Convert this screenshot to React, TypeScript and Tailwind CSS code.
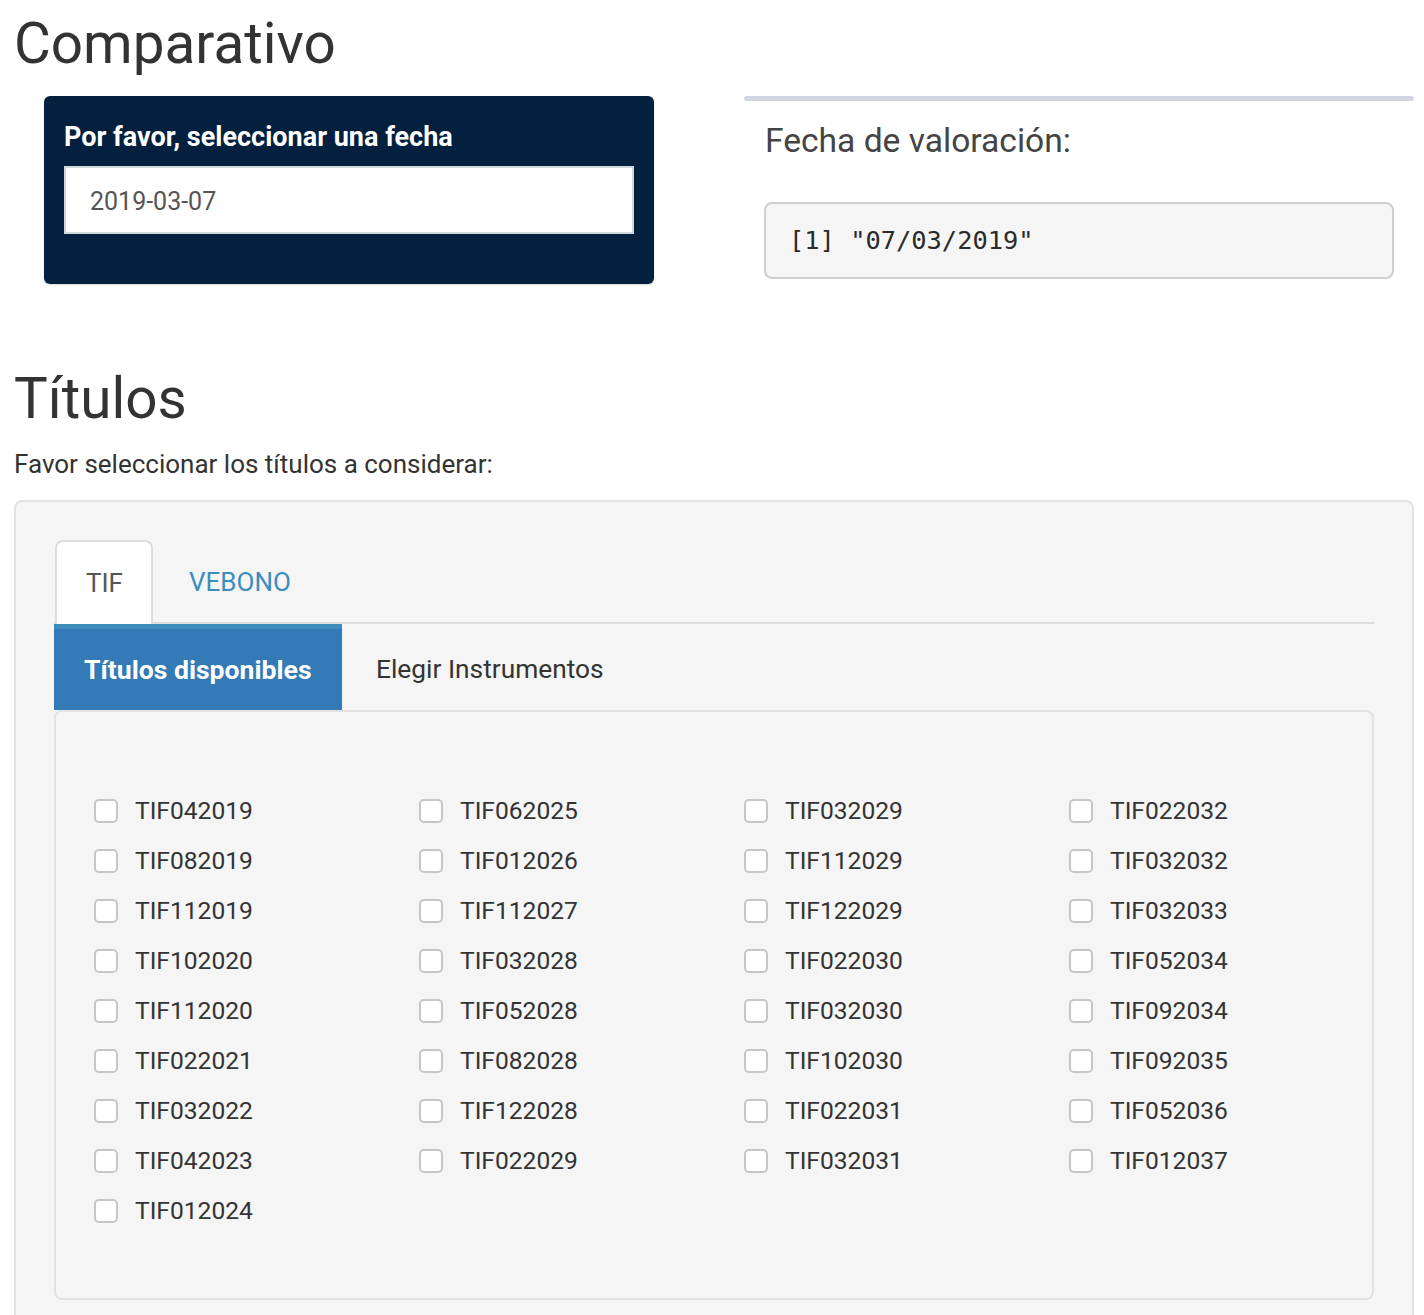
import React from "react";

const cols: string[][] = [
  ["TIF042019", "TIF082019", "TIF112019", "TIF102020", "TIF112020", "TIF022021", "TIF032022", "TIF042023", "TIF012024"],
  ["TIF062025", "TIF012026", "TIF112027", "TIF032028", "TIF052028", "TIF082028", "TIF122028", "TIF022029"],
  ["TIF032029", "TIF112029", "TIF122029", "TIF022030", "TIF032030", "TIF102030", "TIF022031", "TIF032031"],
  ["TIF022032", "TIF032032", "TIF032033", "TIF052034", "TIF092034", "TIF092035", "TIF052036", "TIF012037"],
];

function Check({ label }: { label: string }) {
  return (
    <div className="flex h-[50px] items-center">
      <span className="box-border h-[24px] w-[24px] shrink-0 rounded-[5px] border-2 border-[#c6c6c6] bg-white" />
      <span className="ml-[17px] text-[24.6px] leading-[50px] text-[#333]">{label}</span>
    </div>
  );
}

export default function App() {
  return (
    <div className="min-h-[1315px] w-[1424px] bg-white pl-[14px] pr-[10px] text-[#333]" style={{ fontFamily: "Roboto, 'Liberation Sans', sans-serif" }}>
      <h1 className="pt-[11px] text-[56.6px] font-normal leading-[66px] text-[#333]">Comparativo</h1>

      <div className="mt-[19px] flex">
        <div className="w-[700px]">
          <div className="ml-[30px] box-border h-[188px] w-[610px] rounded-[6px] bg-[#03203f] pl-[20px] pt-[25px] shadow-[0_1px_2px_rgba(0,0,0,0.15)]">
            <div className="text-[27px] font-bold leading-[32px] text-white">Por favor, seleccionar una fecha</div>
            <div className="mt-[13px] box-border flex h-[68px] w-[570px] items-center border-2 border-[#d2d6de] bg-white pl-[24px] pt-[3px] text-[25px] text-[#555]">
              2019-03-07
            </div>
          </div>
        </div>
        <div className="w-[700px]">
          <div className="ml-[30px] h-[5px] rounded-[3px] bg-[#d2d6de]" />
          <div className="ml-[51px] mt-[20px] text-[33.6px] leading-[40px] text-[#444]">Fecha de valoración:</div>
          <div
            className="ml-[50px] mt-[41px] box-border flex h-[77px] w-[630px] items-center rounded-[8px] border-2 border-[#cfcfcf] bg-[#f5f5f5] pl-[23px] text-[25.4px] text-[#2a2a2a]"
            style={{ fontFamily: "'DejaVu Sans Mono', 'Liberation Mono', monospace" }}
          >
            [1] "07/03/2019"
          </div>
        </div>
      </div>

      <h2 className="mt-[82px] text-[56.6px] font-normal leading-[66px] text-[#333]">Títulos</h2>
      <div className="mt-[14px] text-[26px] leading-[36px] text-[#333]">Favor seleccionar los títulos a considerar:</div>

      <div className="mt-[18px] box-border w-[1400px] rounded-[8px] border-2 border-[#e3e3e3] bg-[#f5f5f5] px-[38px] pb-[40px] pt-[38px]">
        <div className="flex h-[84px] border-b-2 border-[#dddddd]">
          <div className="-mb-[2px] ml-[1px] box-border flex h-[84px] w-[98px] items-center rounded-t-[8px] border-2 border-b-0 border-[#dddddd] bg-white pl-[29px] text-[26px] text-[#555]">
            TIF
          </div>
          <div className="ml-[36px] flex items-center pt-[3px] text-[26px] text-[#3c8dbc]">VEBONO</div>
        </div>
        <div className="flex h-[86px]">
          <div className="box-border flex w-[288px] items-center border-t-[5px] border-[#3c8dbc] bg-[#337ab7] pl-[30px] text-[26.6px] font-bold text-white">
            Títulos disponibles
          </div>
          <div className="ml-[4px] flex items-center pl-[30px] pt-[6px] text-[26.3px] text-[#333]">Elegir Instrumentos</div>
        </div>
        <div className="box-border h-[590px] rounded-[8px] border-2 border-[#e3e3e3] bg-[#f5f5f5] pl-[38px] pt-[74px]">
          <div className="grid grid-cols-[repeat(4,325px)]">
            {cols.map((c, i) => (
              <div key={i}>
                {c.map((l) => (
                  <Check key={l} label={l} />
                ))}
              </div>
            ))}
          </div>
        </div>
      </div>
    </div>
  );
}
